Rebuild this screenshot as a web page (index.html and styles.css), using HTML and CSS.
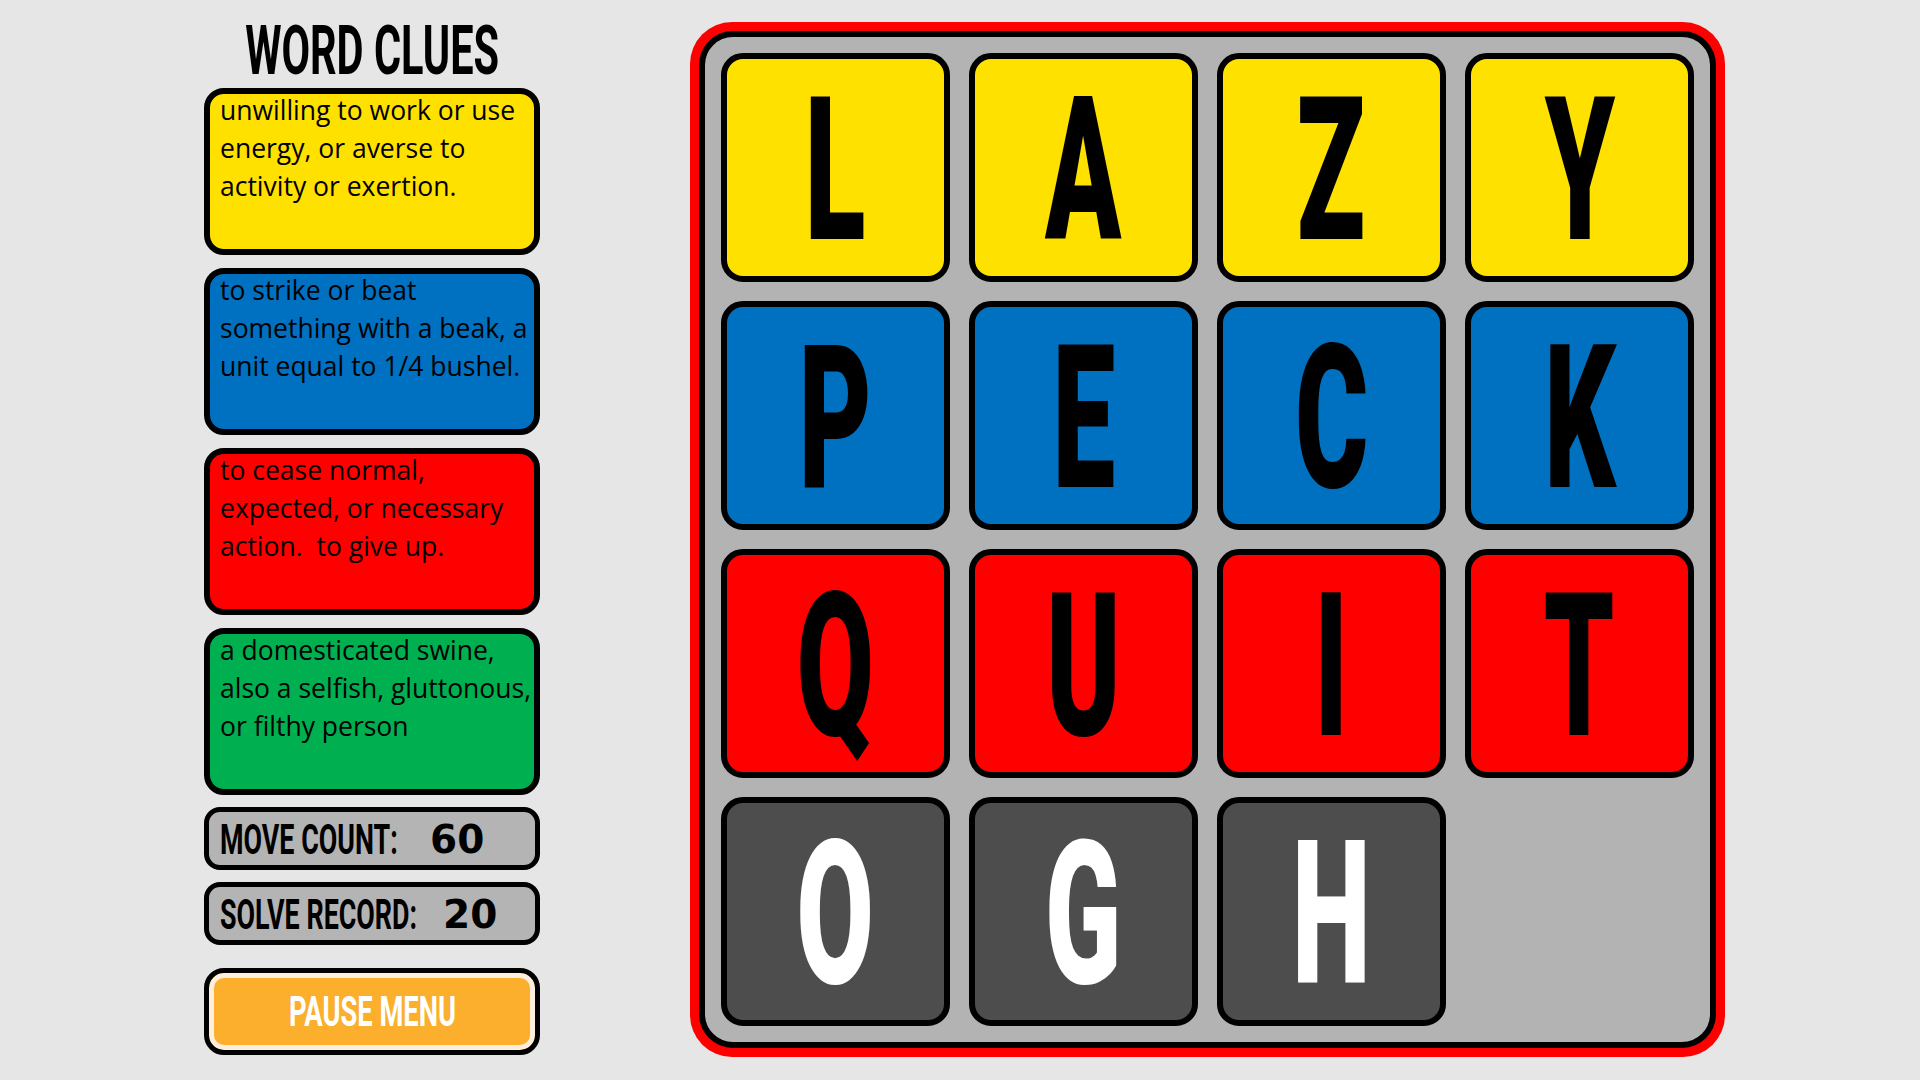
FILE: index.html
```html
<!DOCTYPE html>
<html lang="en">
<head>
<meta charset="utf-8">
<title>Word Clues</title>
<link rel="stylesheet" href="styles.css">
</head>
<body>
<div class="app">
  <aside class="sidebar">
    <h1 class="title"><span class="cond title-text">WORD CLUES</span></h1>
    <div class="clue clue-yellow"><p class="clue-text">unwilling to work or use<br>energy, or averse to<br>activity or exertion.</p></div>
    <div class="clue clue-blue"><p class="clue-text">to strike or beat<br>something with a beak, a<br>unit equal to 1/4 bushel.</p></div>
    <div class="clue clue-red"><p class="clue-text">to cease normal,<br>expected, or necessary<br>action.&nbsp; to give up.</p></div>
    <div class="clue clue-green"><p class="clue-text">a domesticated swine,<br>also a selfish, gluttonous,<br>or filthy person</p></div>
    <div class="stat stat-move">
      <div class="stat-label"><span class="cond">MOVE COUNT:</span></div>
      <div class="stat-value">60</div>
    </div>
    <div class="stat stat-solve">
      <div class="stat-label"><span class="cond">SOLVE RECORD:</span></div>
      <div class="stat-value">20</div>
    </div>
    <button class="pause"><span class="cond">PAUSE MENU</span></button>
  </aside>

  <main class="board-frame">
    <div class="board">
      <div class="tile t-yellow"><span class="letter">L</span></div>
      <div class="tile t-yellow"><span class="letter">A</span></div>
      <div class="tile t-yellow"><span class="letter">Z</span></div>
      <div class="tile t-yellow"><span class="letter">Y</span></div>
      <div class="tile t-blue"><span class="letter">P</span></div>
      <div class="tile t-blue"><span class="letter">E</span></div>
      <div class="tile t-blue"><span class="letter">C</span></div>
      <div class="tile t-blue"><span class="letter">K</span></div>
      <div class="tile t-red"><span class="letter">Q</span></div>
      <div class="tile t-red"><span class="letter">U</span></div>
      <div class="tile t-red"><span class="letter">I</span></div>
      <div class="tile t-red"><span class="letter">T</span></div>
      <div class="tile t-dark"><span class="letter">O</span></div>
      <div class="tile t-dark"><span class="letter">G</span></div>
      <div class="tile t-dark"><span class="letter">H</span></div>
    </div>
  </main>
</div>
</body>
</html>
```

FILE: styles.css
```css
* { box-sizing: border-box; }

html, body {
  margin: 0;
  padding: 0;
}

body {
  width: 1920px;
  height: 1080px;
  overflow: hidden;
  background: #e6e6e6;
  font-family: "Open Sans", "Noto Sans", sans-serif;
  color: #000;
}

.app {
  display: flex;
  align-items: flex-start;
  gap: 150px;
  padding-left: 204px;
}

/* condensed display lettering */
.cond {
  display: inline-block;
  font-family: Roboto, "Liberation Sans", sans-serif;
  font-weight: 700;
  white-space: nowrap;
  transform: scaleX(0.64);
  transform-origin: center;
}

/* ---------- sidebar ---------- */
.sidebar {
  width: 336px;
  padding-top: 17px;
  display: flex;
  flex-direction: column;
}

.title {
  margin: 0 0 3px;
  height: 68px;
  display: flex;
  justify-content: center;
  font-size: 68px;
  line-height: 68px;
  font-weight: 700;
}

.title-text {
  flex: none;
  transform: scaleX(0.61);
}

.clue {
  height: 167px;
  margin-bottom: 13px;
  border: 6px solid #000;
  border-radius: 20px;
  padding: 0 4px 0 10px;
  white-space: nowrap;
}

.clue-text {
  margin: -3px 0 0;
  font-size: 26.5px;
  line-height: 38px;
}

.clue-yellow { background: #ffe100; }
.clue-blue { background: #0070c0; }
.clue-red { background: #ff0000; }
.clue-green { background: #00b050; margin-bottom: 12px; }

.stat {
  height: 63px;
  margin-bottom: 12px;
  border: 5px solid #000;
  border-radius: 16px;
  background: #b4b4b4;
  padding-left: 11px;
  display: flex;
  align-items: center;
}

.stat-label {
  font-size: 42px;
  line-height: 42px;
}

.stat-label .cond {
  transform-origin: left center;
}

.stat-move .stat-label { width: 210px; }
.stat-solve .stat-label { width: 223px; }

.stat-value {
  font-family: "DejaVu Sans", Verdana, sans-serif;
  font-weight: 700;
  font-size: 39px;
  line-height: 39px;
  padding-top: 1px;
}

.stat-solve { margin-bottom: 23px; }

.pause {
  height: 87px;
  width: 100%;
  border: 5px solid #000;
  border-radius: 20px;
  background: #fbaf2d;
  box-shadow: inset 0 0 0 5px #fdeedd;
  color: #fff;
  font-size: 42px;
  line-height: 42px;
  padding: 0;
  display: flex;
  align-items: center;
  justify-content: center;
}

.pause .cond {
  transform: scaleX(0.65);
}

/* ---------- board ---------- */
.board-frame {
  margin-top: 22px;
  width: 1035px;
  height: 1035px;
  padding: 9px;
  background: #ff0000;
  border-radius: 42px;
}

.board {
  width: 100%;
  height: 100%;
  border: 6px solid #000;
  border-radius: 34px;
  background: #b3b3b3;
  padding: 16px;
  display: grid;
  grid-template-columns: repeat(4, 229px);
  grid-auto-rows: 229px;
  gap: 19px;
}

.tile {
  border: 6px solid #000;
  border-radius: 22px;
  display: flex;
  align-items: center;
  justify-content: center;
  padding-top: 6px;
}

.letter {
  display: inline-block;
  font-family: Roboto, "Liberation Sans", sans-serif;
  font-weight: 900;
  font-size: 200px;
  line-height: 200px;
  transform: scaleX(0.56);
}

.t-yellow { background: #ffe100; }
.t-blue { background: #0070c0; }
.t-red { background: #ff0000; }
.t-dark { background: #4d4d4d; color: #fff; }
```
